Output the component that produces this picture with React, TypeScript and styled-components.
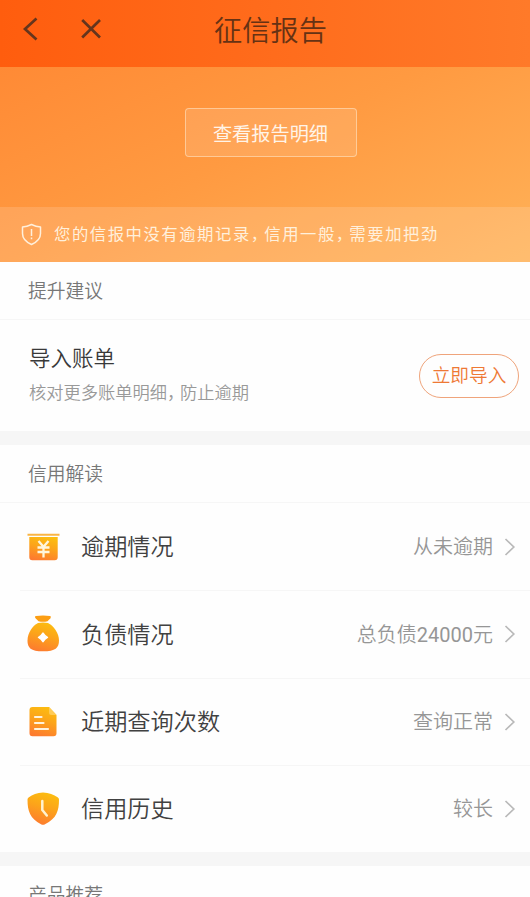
import React from "react";
import styled, { createGlobalStyle } from "styled-components";

const GlobalStyle = createGlobalStyle`
  * { box-sizing: border-box; }
  html, body { margin: 0; padding: 0; background: #fff; }
  body {
    height: 897px;
    overflow: hidden;
    font-family: Roboto, "Noto Sans CJK SC", sans-serif;
    font-weight: 350;
  }
`;

const Page = styled.main`
  display: flex;
  flex-direction: column;
  width: 530px;
  height: 897px;
  overflow: hidden;
  background: #fefefe;
`;

const Header = styled.header`
  display: grid;
  grid-template-columns: 60px 60px 1fr 109px;
  flex: none;
  height: 67px;
  background: linear-gradient(90deg, #ff5d0e, #ff7a29);
`;

const IconButton = styled.button`
  display: flex;
  justify-content: center;
  padding: 13px 0 0;
  border: 0;
  background: none;
`;

const Title = styled.h1`
  margin: 0;
  padding: 11px 0 0 0;
  text-align: center;
  font-size: 28.2px;
  line-height: 42px;
  font-weight: 350;
  color: #663214;
`;

const Hero = styled.section`
  display: flex;
  flex-direction: column;
  align-items: center;
  justify-content: space-between;
  flex: none;
  height: 195px;
  padding-top: 41px;
  background: linear-gradient(155deg, #ff8a35 0%, #ff9a41 45%, #ffb258 100%);
`;

const DetailButton = styled.button`
  width: 172px;
  height: 49px;
  margin-left: 11px;
  padding: 0;
  border: 1px solid rgba(255, 225, 190, 0.62);
  border-radius: 4px;
  background: rgba(255, 255, 255, 0.12);
  color: #fff4e8;
  font: inherit;
  font-size: 19.2px;
  font-weight: 400;
`;

const Notice = styled.div`
  display: flex;
  align-items: center;
  gap: 12px;
  width: 100%;
  height: 55px;
  padding-left: 21px;
  background: rgba(255, 255, 255, 0.14);
  color: #fff0dc;
`;

const NoticeText = styled.span`
  padding-bottom: 3px;
  font-size: 16.4px;
  font-weight: 400;
  letter-spacing: 1.5px;
  white-space: nowrap;
`;

const Comma = styled.span<{ $tighten: number }>`
  letter-spacing: ${({ $tighten }) => -$tighten}px;
`;

const Section = styled.section<{ $gap?: boolean }>`
  flex: none;
  border-top: ${({ $gap }) => ($gap ? "14px solid #f6f6f6" : "0")};
`;

const SectionTitle = styled.h2`
  display: flex;
  align-items: center;
  height: 58px;
  margin: 0;
  padding: 0 0 3px 28px;
  border-bottom: 1px solid #f6f6f6;
  font-size: 18.8px;
  font-weight: 350;
  color: #777;
`;

const Suggestion = styled.div`
  display: flex;
  justify-content: space-between;
  height: 111px;
  padding: 23px 11px 0 29px;
`;

const SuggestionName = styled.div`
  font-size: 21.5px;
  line-height: 32px;
  color: #393939;
`;

const SuggestionHint = styled.div`
  margin-top: 5px;
  font-size: 17.25px;
  line-height: 26px;
  color: #999;
  white-space: nowrap;
`;

const ImportButton = styled.button`
  width: 100px;
  height: 44px;
  margin-top: 11px;
  padding: 0 0 5px;
  border: 1px solid #efa47b;
  border-radius: 22px;
  background: none;
  color: #ee7935;
  font: inherit;
  font-size: 18.7px;
`;

const Rows = styled.ul`
  margin: 0;
  padding: 0;
  list-style: none;
`;

const Row = styled.li`
  height: 87.25px;
  padding-left: 20px;

  & + & > div {
    border-top: 1px solid #f6f6f6;
  }
`;

const RowBody = styled.div`
  display: flex;
  align-items: center;
  height: 100%;
  padding: 0 14px 0 7px;
`;

const RowName = styled.span`
  flex: 1;
  padding: 0 0 3px 22px;
  font-size: 23.2px;
  color: #414141;
`;

const RowValue = styled.span`
  margin-right: 11px;
  padding-bottom: 2px;
  font-size: 20px;
  color: #969696;
`;

const Digits = styled.span`
  font-weight: 400;
`;

const Glyph = styled.svg`
  display: block;
  flex: none;
  overflow: visible;
`;

const Fill = ({ id }: { id: string }) => (
  <defs>
    <linearGradient id={id} x1="0.65" y1="0" x2="0.35" y2="1">
      <stop offset="0" stopColor="#fcbd10" />
      <stop offset="0.45" stopColor="#fca41a" />
      <stop offset="1" stopColor="#fd7b2f" />
    </linearGradient>
  </defs>
);

const BillIcon = () => (
  <Glyph width="32" height="40" viewBox="0 0 32 40">
    <Fill id="bill" />
    <path d="M0.500 6.800h32v2h-32z" fill="#f9b544" />
    <path d="M2.300 10h28.400v20.200a3 3 0 0 1-3 3H5.300a3 3 0 0 1-3-3z" fill="url(#bill)" />
    <path d="M11.500 14l5 5.800 5-5.800M16.500 19.800v10.700M10.500 20.500h12M10.500 25h12" fill="none" stroke="#fff6dd" strokeWidth="2.300" />
  </Glyph>
);

const MoneyBagIcon = () => (
  <Glyph width="32" height="40" viewBox="0 0 32 40">
    <Fill id="bag" />
    <path d="M9 2Q16 0.900 23 2Q24.800 2.600 23.400 4.300L20.500 7.200Q16 8.200 11.500 7.200L8.600 4.300Q7.200 2.600 9 2z" fill="#fc9e13" />
    <path d="M11 9Q16 8 21 9c5.500 2.400 11 10.200 11 17.500 0 7.300-3.500 10.800-16 10.800S0.500 33.800 0.500 26.500C0.500 19.200 5.500 11.400 11 9z" fill="url(#bag)" />
    <path d="M16 19.200Q17.500 21.900 20.400 23.400Q17.500 24.900 16 27.600Q14.500 24.900 11.600 23.400Q14.500 21.900 16 19.200z" fill="#fff" stroke="#fff" strokeWidth="1.600" strokeLinejoin="round" />
  </Glyph>
);

const ReportIcon = () => (
  <Glyph width="32" height="40" viewBox="0 0 32 40">
    <Fill id="report" />
    <path d="M5.500 5H22l7.500 8V31.200a3 3 0 0 1-3 3h-21a3 3 0 0 1-3-3V8a3 3 0 0 1 3-3z" fill="url(#report)" />
    <path d="M22 5v5.500a2.500 2.500 0 0 0 2.500 2.500h5z" fill="#ffcb56" />
    <path d="M8 15h6.500M8 21h8.500M8 27h13" fill="none" stroke="#fff3dc" strokeWidth="2.200" strokeLinecap="round" />
  </Glyph>
);

const HistoryIcon = () => (
  <Glyph width="32" height="40" viewBox="0 0 32 40">
    <Fill id="history" />
    <path d="M16 3.500Q25 4.200 30.600 8.200Q32 9 32 10.500C32 22 29.500 29.500 18 35.200Q16 36.200 14 35.200C3 29.500 0.500 22 0.500 10.500Q0.500 9 1.900 8.200Q7 4.200 16 3.500z" fill="url(#history)" />
    <path d="M15.300 12v9l4.500 5.500" fill="none" stroke="#fff2cf" strokeWidth="2.500" strokeLinecap="round" strokeLinejoin="round" />
  </Glyph>
);

const Chevron = () => (
  <Glyph width="12" height="18" viewBox="0 0 12 18">
    <path d="M1.500 1L9.800 9L1.500 17" fill="none" stroke="#b9b9b9" strokeWidth="1.700" />
  </Glyph>
);

const items = [
  { name: "逾期情况", value: "从未逾期", Icon: BillIcon },
  { name: "负债情况", value: <>总负债<Digits>24000</Digits>元</>, Icon: MoneyBagIcon },
  { name: "近期查询次数", value: "查询正常", Icon: ReportIcon },
  { name: "信用历史", value: "较长", Icon: HistoryIcon },
];

export default function App() {
  return (
    <>
      <GlobalStyle />
      <Page>
        <Header>
          <IconButton aria-label="返回">
            <Glyph width="32" height="32" viewBox="0 0 32 32">
              <path d="M22.500 5.500L11 16L22.500 26.500" fill="none" stroke="#65351d" strokeWidth="2.700" />
            </Glyph>
          </IconButton>
          <IconButton aria-label="关闭">
            <Glyph width="32" height="32" viewBox="0 0 32 32">
              <path d="M8.200 7L26 24.500M26 7L8.200 24.500" fill="none" stroke="#65351d" strokeWidth="2.700" />
            </Glyph>
          </IconButton>
          <Title>征信报告</Title>
        </Header>
        <Hero>
          <DetailButton>查看报告明细</DetailButton>
          <Notice>
            <Glyph width="21" height="23" viewBox="0 0 21 23">
              <path d="M10.500 1.500Q15 3.700 19.500 4V10.500Q19.500 17.500 10.500 21.500Q1.500 17.500 1.500 10.500V4Q6 3.700 10.500 1.500z" fill="none" stroke="currentColor" strokeWidth="1.500" strokeLinejoin="round" />
              <path d="M10.500 6v7M10.500 14.500v1.700" fill="none" stroke="currentColor" strokeWidth="1.500" />
            </Glyph>
            <NoticeText>
              您的信报中没有逾期记录<Comma $tighten={2.9}>，</Comma>信用一般<Comma $tighten={2.9}>，</Comma>需要加把劲
            </NoticeText>
          </Notice>
        </Hero>
        <Section>
          <SectionTitle>提升建议</SectionTitle>
          <Suggestion>
            <div>
              <SuggestionName>导入账单</SuggestionName>
              <SuggestionHint>
                核对更多账单明细<Comma $tighten={4.2}>，</Comma>防止逾期
              </SuggestionHint>
            </div>
            <ImportButton>立即导入</ImportButton>
          </Suggestion>
        </Section>
        <Section $gap>
          <SectionTitle>信用解读</SectionTitle>
          <Rows>
            {items.map(({ name, value, Icon }) => (
              <Row key={name}>
                <RowBody>
                  <Icon />
                  <RowName>{name}</RowName>
                  <RowValue>{value}</RowValue>
                  <Chevron />
                </RowBody>
              </Row>
            ))}
          </Rows>
        </Section>
        <Section $gap>
          <SectionTitle>产品推荐</SectionTitle>
        </Section>
      </Page>
    </>
  );
}
